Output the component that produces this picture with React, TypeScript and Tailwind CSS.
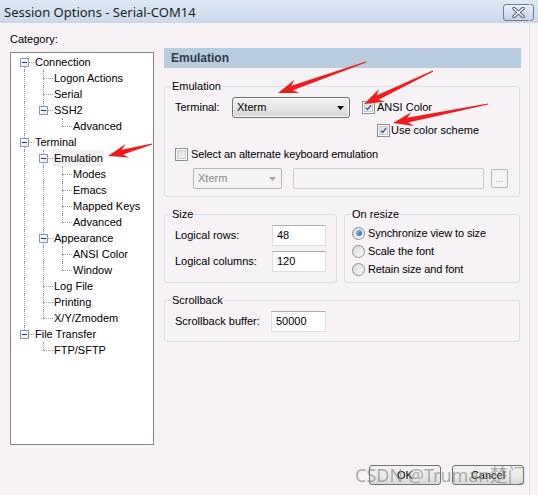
import type { ReactNode } from 'react';

type Node = { label: string; selected?: boolean; children?: Node[] };

const TREE: Node[] = [
  {
    label: 'Connection',
    children: [{ label: 'Logon Actions' }, { label: 'Serial' }, { label: 'SSH2', children: [{ label: 'Advanced' }] }],
  },
  {
    label: 'Terminal',
    children: [
      {
        label: 'Emulation',
        selected: true,
        children: [{ label: 'Modes' }, { label: 'Emacs' }, { label: 'Mapped Keys' }, { label: 'Advanced' }],
      },
      { label: 'Appearance', children: [{ label: 'ANSI Color' }, { label: 'Window' }] },
      { label: 'Log File' },
      { label: 'Printing' },
      { label: 'X/Y/Zmodem' },
    ],
  },
  { label: 'File Transfer', children: [{ label: 'FTP/SFTP' }] },
];

type Row = { node: Node; guides: boolean[]; last: boolean; first: boolean };

function flatten(nodes: Node[], guides: boolean[], out: Row[]) {
  nodes.forEach((n, i) => {
    const last = i === nodes.length - 1;
    out.push({ node: n, guides, last, first: guides.length === 0 && i === 0 });
    if (n.children) flatten(n.children, [...guides, !last], out);
  });
  return out;
}

const ROWS = flatten(TREE, [], []);

const DOT = 'absolute border-dotted border-[#a0a0a0]';

function TreeRow({ row }: { row: Row }) {
  return (
    <div className="flex h-[16px] items-center">
      {row.guides.map((g, i) => (
        <div key={i} className="relative h-[16px] w-[19px] shrink-0">
          {g && <div className={`${DOT} left-[9px] top-0 h-[16px] border-l`} />}
        </div>
      ))}
      <div className="relative h-[16px] w-[19px] shrink-0">
        {!row.first && <div className={`${DOT} left-[9px] top-0 h-[8px] border-l`} />}
        {!row.last && <div className={`${DOT} left-[9px] top-[8px] h-[8px] border-l`} />}
        <div className={`${DOT} left-[9px] top-[8px] w-[10px] border-t`} />
        {row.node.children && (
          <div className="absolute left-[5px] top-[4px] flex h-[9px] w-[9px] items-center justify-center border border-[#8c9bb0] bg-gradient-to-br from-white to-[#e4e8ee]">
            <div className="h-px w-[5px] bg-[#2a3a55]" />
          </div>
        )}
      </div>
      <span className={`px-px leading-[16px] ${row.node.selected ? 'bg-[#f3eef1]' : ''}`}>{row.node.label}</span>
    </div>
  );
}

function Group({ title, className, children }: { title: string; className: string; children: ReactNode }) {
  return (
    <fieldset className={`rounded-[3px] border border-[#d5dfe5] ${className}`}>
      <legend className="ml-[6px] px-px leading-[14px]">{title}</legend>
      {children}
    </fieldset>
  );
}

function Check({ checked }: { checked?: boolean }) {
  return (
    <div className="flex h-[13px] w-[13px] shrink-0 items-center justify-center border border-[#8e8f8f] bg-white">
      <div className="flex h-[9px] w-[9px] items-center justify-center border border-[#c8cbd0] bg-gradient-to-br from-[#dcdfe3] to-[#f8f8f8]">
        {checked && (
          <svg width="9" height="9" viewBox="0 0 9 9">
            <path d="M1.2 4.6 L3.4 7 L7.8 1.4" fill="none" stroke="#3d5188" strokeWidth="1.7" />
          </svg>
        )}
      </div>
    </div>
  );
}

function Radio({ checked }: { checked?: boolean }) {
  return (
    <div className="flex h-[13px] w-[13px] shrink-0 items-center justify-center rounded-full border border-[#8e8f8f] bg-gradient-to-br from-[#d8dbe0] to-[#fbfbfb]">
      {checked && <div className="h-[6px] w-[6px] rounded-full bg-gradient-to-br from-[#8fd0f5] to-[#1a5fa0]" />}
    </div>
  );
}

function Field({ value, w }: { value: string; w: string }) {
  return (
    <div
      className={`${w} flex h-[21px] items-center border border-[#dbdfe6] border-t-[#abadb3] bg-white pl-[4px] text-black`}
    >
      {value}
    </div>
  );
}

function Combo({ disabled }: { disabled?: boolean }) {
  return disabled ? (
    <div className="flex h-[21px] w-[89px] items-center justify-between rounded-[2px] border border-[#b5b8bc] bg-[#f4f4f4] pl-[4px] pr-[5px] text-[#8a8a8a]">
      Xterm
      <svg width="7" height="4" viewBox="0 0 7 4">
        <path d="M0 0 H7 L3.5 4 Z" fill="#a6a6a6" />
      </svg>
    </div>
  ) : (
    <div className="flex h-[21px] w-[118px] items-center justify-between rounded-[3px] border border-[#707070] bg-gradient-to-b from-[#f3f3f3] via-[#e6e6e6] to-[#d6d6d6] pl-[4px] pr-[5px] shadow-[inset_0_0_0_1px_#fbfbfb]">
      Xterm
      <svg width="7" height="4" viewBox="0 0 7 4">
        <path d="M0 0 H7 L3.5 4 Z" fill="#000" />
      </svg>
    </div>
  );
}

function arrowPoints(tx: number, ty: number, px: number, py: number, hl = 20, hw = 7) {
  const dx = px - tx;
  const dy = py - ty;
  const l = Math.hypot(dx, dy);
  const ux = dx / l;
  const uy = dy / l;
  const nx = -uy;
  const ny = ux;
  const nkx = px - ux * hl;
  const nky = py - uy * hl;
  const n2x = nkx + ux * 5;
  const n2y = nky + uy * 5;
  const pts = [
    [tx + nx * 0.6, ty + ny * 0.6],
    [n2x + nx * 2.4, n2y + ny * 2.4],
    [nkx + nx * hw, nky + ny * hw],
    [px, py],
    [nkx - nx * hw, nky - ny * hw],
    [n2x - nx * 2.4, n2y - ny * 2.4],
    [tx - nx * 0.6, ty - ny * 0.6],
  ];
  return pts.map((p) => p.map((v) => v.toFixed(1)).join(',')).join(' ');
}

const ARROWS: [number, number, number, number][] = [
  [152, 144, 108, 156],
  [366, 62, 278, 93],
  [433, 71, 364, 104],
  [488, 104, 393, 123],
];

function Button({ children }: { children: ReactNode }) {
  return (
    <div className="flex h-[20px] w-[72px] items-center justify-center rounded-[3px] border border-[#707070] bg-gradient-to-b from-[#f2f2f2] via-[#ebebeb] to-[#d9d9d9]">
      {children}
    </div>
  );
}

export default function App() {
  return (
    <div className="relative h-[495px] w-[538px] overflow-hidden bg-[#f6f2f6] font-['Liberation_Sans',Arial,sans-serif] text-[11px] text-black">
      <div className="flex h-[23px] items-start justify-between border-b border-[#c9d6e6] bg-gradient-to-b from-[#dfe9f5] to-[#c9d9ec]">
        <span className="pl-[4px] pt-[3px] font-['Noto_Sans',sans-serif] text-[13px] leading-[18px] text-[#1e1e1e]">
          Session Options - Serial-COM14
        </span>
        <div className="mr-[4px] mt-[4px] flex h-[17px] w-[31px] items-center justify-center rounded-[3px] border border-[#6d7c94] bg-gradient-to-b from-[#e9eff7] to-[#c5d3e6]">
          <svg width="13" height="11" viewBox="0 0 13 11">
            <path d="M2 1.5 L11 9.5 M11 1.5 L2 9.5" stroke="#4b556a" strokeWidth="3.4" strokeLinecap="round" />
            <path d="M2 1.5 L11 9.5 M11 1.5 L2 9.5" stroke="#ffffff" strokeWidth="1.6" strokeLinecap="round" />
          </svg>
        </div>
      </div>

      <div className="flex">
        <div className="w-[164px] shrink-0 pl-[10px]">
          <div className="pt-[9px] leading-[14px]">Category:</div>
          <div className="mt-[6px] h-[393px] w-[144px] border border-[#828790] bg-white pl-[4px] pt-px">
            {ROWS.map((r, i) => (
              <TreeRow key={i} row={r} />
            ))}
          </div>
        </div>

        <div className="w-[356px]">
          <div className="mt-[25px] h-[20px] w-[357px] bg-[#b9cddf] pl-[7px] text-[12px] font-bold leading-[20px] text-[#2f3b4b]">
            Emulation
          </div>

          <Group title="Emulation" className="mt-[11px] w-[356px]">
            <div className="pb-[7px] pl-[10px] pt-[4px]">
              <div className="flex h-[21px] items-center">
                <span className="w-[57px]">Terminal:</span>
                <Combo />
                <div className="ml-[12px] flex items-center gap-[2px]">
                  <Check checked />
                  <span>ANSI Color</span>
                </div>
              </div>
              <div className="ml-[202px] mt-[6px] flex h-[13px] items-center gap-[1px]">
                <Check checked />
                <span>Use color scheme</span>
              </div>
              <div className="mt-[11px] flex h-[13px] items-center gap-[3px]">
                <Check />
                <span className="tracking-[-0.1px]">Select an alternate keyboard emulation</span>
              </div>
              <div className="ml-[18px] mt-[7px] flex h-[21px] items-center">
                <Combo disabled />
                <div className="ml-[11px] h-[21px] w-[191px] rounded-[2px] border border-[#c9ccd1] bg-[#f4f4f4]" />
                <div className="ml-[7px] flex h-[19px] w-[17px] items-end justify-center rounded-[2px] border border-[#b5b8bc] bg-[#f4f4f4] pb-[3px] text-[9px] leading-[9px] text-[#8a8a8a]">
                  ...
                </div>
              </div>
            </div>
          </Group>

          <div className="mt-[10px] flex gap-[7px]">
            <Group title="Size" className="w-[173px]">
              <div className="flex flex-col gap-[5px] pb-[10px] pl-[10px] pt-[4px]">
                <div className="flex items-center">
                  <span className="w-[97px]">Logical rows:</span>
                  <Field value="48" w="w-[54px]" />
                </div>
                <div className="flex items-center">
                  <span className="w-[97px]">Logical columns:</span>
                  <Field value="120" w="w-[54px]" />
                </div>
              </div>
            </Group>
            <Group title="On resize" className="w-[176px]">
              <div className="pb-[4px] pl-[7px] pt-[3px]">
                {['Synchronize view to size', 'Scale the font', 'Retain size and font'].map((t, i) => (
                  <div key={t} className="flex h-[18px] items-center gap-[3px]">
                    <Radio checked={i === 0} />
                    <span className="tracking-[-0.1px]">{t}</span>
                  </div>
                ))}
              </div>
            </Group>
          </div>

          <Group title="Scrollback" className="mt-[10px] w-[356px]">
            <div className="flex items-center pb-[9px] pl-[10px] pt-[4px]">
              <span className="w-[96px]">Scrollback buffer:</span>
              <Field value="50000" w="w-[55px]" />
            </div>
          </Group>
        </div>
      </div>

      <div className="mt-[20px] flex justify-end gap-[11px] pr-[14px]">
        <Button>OK</Button>
        <Button>Cancel</Button>
      </div>

      <div className="absolute right-[8px] top-0 h-full w-px bg-[#e4e0e6]" />

      <svg className="pointer-events-none absolute left-0 top-0" width="538" height="495">
        {ARROWS.map((a, i) => (
          <polygon key={i} points={arrowPoints(...a)} fill="#f21b1b" />
        ))}
      </svg>

      <span className="pointer-events-none absolute left-[355px] top-[463px] font-['Noto_Sans','Noto_Sans_CJK_SC',sans-serif] text-[18px] leading-[24px] text-[#8c8c8c]/70">
        CSDN @Truman楚门
      </span>
    </div>
  );
}
